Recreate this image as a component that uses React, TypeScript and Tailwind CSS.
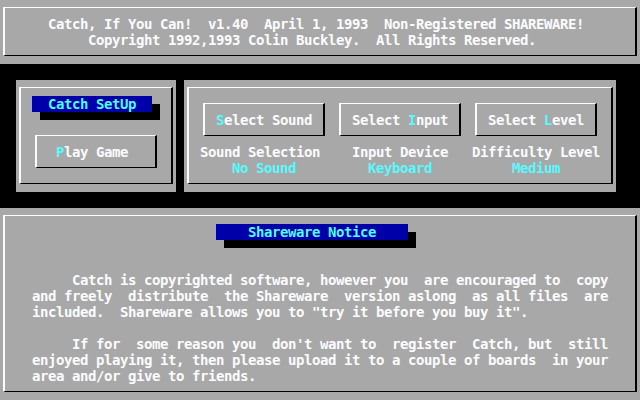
import type { ReactNode } from 'react';

// 80x25 text screen: every cell is 8x16
const bevel =
  'border-t border-l-2 border-b border-r-2 border-t-[#fcfcfc] border-l-[#fcfcfc] border-b-black border-r-black';

function Panel({ className, children }: { className: string; children: ReactNode }) {
  return (
    <div className={`bg-[#a8a8a8] pt-[7px] pl-[3px] pr-[3px] pb-2 ${className}`}>
      <div className={`h-full pt-2 pl-[3px] ${bevel}`}>{children}</div>
    </div>
  );
}

function Title({ text, className }: { text: string; className: string }) {
  return (
    <div
      className={`h-4 bg-[#0000a8] text-[#54fcfc] shadow-[8px_8px_0_#000] whitespace-pre ${className}`}
    >
      {text}
    </div>
  );
}

function Key({
  before = '',
  hot,
  after,
  className,
}: {
  before?: string;
  hot: string;
  after: string;
  className: string;
}) {
  return (
    <div className={`w-[122px] pt-2 pb-[7px] whitespace-pre ${bevel} ${className}`}>
      {before}
      <span className="text-[#54fcfc]">{hot}</span>
      {after}
    </div>
  );
}

const options = [
  { before: '', hot: 'S', after: 'elect Sound', label: 'Sound Selection', labelPad: 'pl-0', value: 'No Sound', valuePad: 'pl-8' },
  { before: 'Select ', hot: 'I', after: 'nput', label: 'Input Device', labelPad: 'pl-4', value: 'Keyboard', valuePad: 'pl-8' },
  { before: 'Select ', hot: 'L', after: 'evel', label: 'Difficulty Level', labelPad: 'pl-0', value: 'Medium', valuePad: 'pl-10' },
];

export default function App() {
  return (
    <div className="h-[400px] w-[640px] overflow-hidden bg-black font-['DejaVu_Sans_Mono',monospace] text-[14px] font-bold leading-4 tracking-[-0.43px] text-[#fcfcfc]">
      <Panel className="h-16">
        <div className="whitespace-pre pl-10">
          Catch, If You Can!  v1.40  April 1, 1993  Non-Registered SHAREWARE!
        </div>
        <div className="whitespace-pre pl-20">
          Copyright 1992,1993 Colin Buckley.  All Rights Reserved.
        </div>
      </Panel>

      <div className="h-4" />

      <div className="flex h-28">
        <div className="w-4" />
        <Panel className="w-40">
          <Title text="  Catch SetUp  " className="ml-2 w-[120px]" />
          <Key hot="P" after="lay Game" className="ml-[11px] mt-[23px] pl-[19px]" />
        </Panel>
        <div className="w-2" />
        <Panel className="w-[432px]">
          <div className="ml-2 flex gap-2">
            {options.map(o => (
              <div key={o.label} className="w-32">
                <Key
                  before={o.before}
                  hot={o.hot}
                  after={o.after}
                  className="ml-[3px] mt-[7px] pl-[11px]"
                />
                <div className={`mt-2 whitespace-pre ${o.labelPad}`}>{o.label}</div>
                <div className={`whitespace-pre text-[#54fcfc] ${o.valuePad}`}>{o.value}</div>
              </div>
            ))}
          </div>
        </Panel>
        <div className="flex-1" />
      </div>

      <div className="h-4" />

      <Panel className="h-48">
        <Title text="    Shareware Notice    " className="ml-[208px] w-[192px]" />
        <div className="mt-8 whitespace-pre pl-6">
          <div className="pl-10">
            Catch is copyrighted software, however you  are encouraged to  copy
          </div>
          <div>and freely  distribute  the Shareware  version aslong  as all files  are</div>
          <div>included.  Shareware allows you to "try it before you buy it".</div>
          <div className="h-4" />
          <div className="pl-10">
            If for  some reason you  don't want to  register  Catch, but  still
          </div>
          <div>enjoyed playing it, then please upload it to a couple of boards  in your</div>
          <div>area and/or give to friends.</div>
        </div>
      </Panel>
    </div>
  );
}
